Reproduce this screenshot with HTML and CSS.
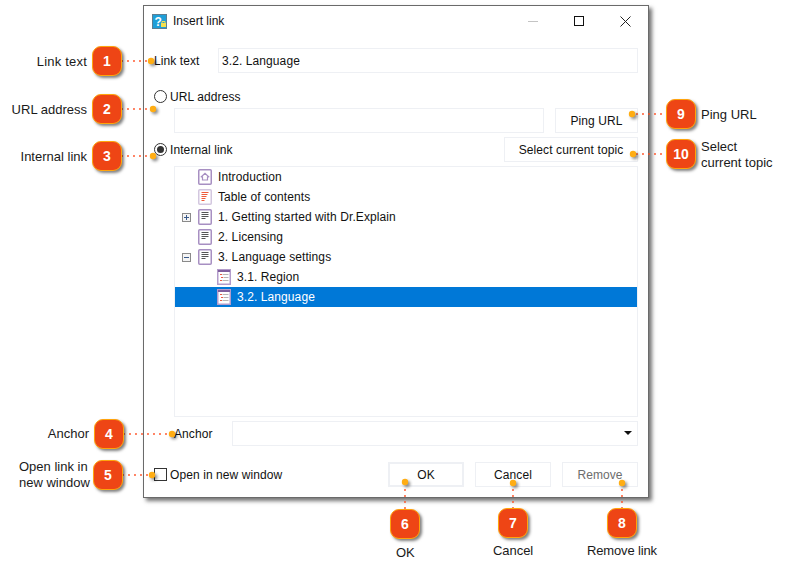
FILE: index.html
```html
<!DOCTYPE html>
<html lang="en">
<head>
<meta charset="utf-8">
<title>Insert link</title>
<link rel="stylesheet" href="styles.css">
</head>
<body>
<svg class="defs" width="0" height="0" aria-hidden="true">
  <symbol id="i-doc" viewBox="0 0 14 16">
    <rect x="0.75" y="0.75" width="12.5" height="14.5" rx="1" fill="#fff" stroke="#a78fc2" stroke-width="1.5"/>
    <path d="M3.5 3.5h7M3.5 5.5h7M3.5 7.5h7M3.5 9.5h4" stroke="#555" stroke-width="1"/>
  </symbol>
  <symbol id="i-home" viewBox="0 0 14 16">
    <rect x="0.75" y="0.75" width="12.5" height="14.5" rx="1" fill="#fff" stroke="#a78fc2" stroke-width="1.5"/>
    <path d="M2.8 8.2L7 4.4l4.2 3.8M4.5 7.5v3.5h5V7.5" fill="none" stroke="#a78fc2" stroke-width="1.2"/>
  </symbol>
  <symbol id="i-toc" viewBox="0 0 14 16">
    <rect x="0.75" y="0.75" width="12.5" height="14.5" rx="1" fill="#fff" stroke="#d3c7df" stroke-width="1.5"/>
    <path d="M3.5 3.5h7M3.5 5.5h6M3.5 7.5h5M3.5 9.5h4M3.5 11.5h3" stroke="#ee5a3a" stroke-width="1"/>
  </symbol>
  <symbol id="i-topic" viewBox="0 0 14 16">
    <rect x="0.75" y="0.75" width="12.5" height="14.5" fill="#fff" stroke="#b39ccb" stroke-width="1.5"/>
    <path d="M1 2h12" stroke="#7f5f9e" stroke-width="2"/>
    <path d="M5.5 5.5h6M6.5 8.5h5M5.5 11.5h6" stroke="#b5b5b5" stroke-width="1"/>
    <path d="M3 5.5h2M4 8.5h2M3 11.5h2" stroke="#ea5a44" stroke-width="1"/>
  </symbol>
</svg>

<main class="canvas">
  <section class="dialog">
    <header class="titlebar">
      <svg class="app-icon" width="15" height="15" viewBox="0 0 15 15" aria-hidden="true">
        <rect x="0.5" y="0.5" width="14" height="14" fill="#1f9fd8" stroke="#5d7f92"/>
        <text class="app-q" x="2.5" y="11.5">?</text>
        <path d="M9 9h5v4H9z" fill="#f5e04e"/>
        <path d="M10 9V7.5h3V9" fill="none" stroke="#f5e04e"/>
      </svg>
      <span class="title">Insert link</span>
      <div class="controls">
        <svg class="ctl" width="10" height="10" viewBox="0 0 10 10" aria-hidden="true"><path d="M0 5.5h10" stroke="#c4c4c4"/></svg>
        <svg class="ctl" width="10" height="10" viewBox="0 0 10 10" aria-hidden="true"><rect x="0.5" y="0.5" width="9" height="9" fill="none" stroke="#111"/></svg>
        <svg class="ctl" width="11" height="11" viewBox="0 0 11 11" aria-hidden="true"><path d="M.5.5l10 10M10.5.5l-10 10" stroke="#222"/></svg>
      </div>
    </header>

    <div class="body">
      <div class="row row-text">
        <label class="lbl-text">Link text</label>
        <div class="field">3.2. Language</div>
      </div>

      <div class="row row-radio1">
        <span class="radio"></span><span class="radio-text">URL address</span>
      </div>

      <div class="row row-url">
        <div class="field"></div>
        <div class="btn btn-ping">Ping URL</div>
      </div>

      <div class="row row-internal">
        <span class="radio radio-on"></span><span>Internal link</span>
        <div class="btn btn-select">Select current topic</div>
      </div>

      <div class="tree">
        <div class="node"><span class="slot"></span><svg class="ico"><use href="#i-home"/></svg>Introduction</div>
        <div class="node"><span class="slot"></span><svg class="ico"><use href="#i-toc"/></svg>Table of contents</div>
        <div class="node"><span class="slot exp"><svg width="9" height="9" viewBox="0 0 9 9"><rect x=".5" y=".5" width="8" height="8" fill="#f4f4f4" stroke="#8a8a8a"/><path d="M2 4.5h5M4.5 2v5" stroke="#3a5a8a"/></svg></span><svg class="ico"><use href="#i-doc"/></svg>1. Getting started with Dr.Explain</div>
        <div class="node"><span class="slot"></span><svg class="ico"><use href="#i-doc"/></svg>2. Licensing</div>
        <div class="node"><span class="slot exp"><svg width="9" height="9" viewBox="0 0 9 9"><rect x=".5" y=".5" width="8" height="8" fill="#f4f4f4" stroke="#8a8a8a"/><path d="M2 4.5h5" stroke="#3a5a8a"/></svg></span><svg class="ico"><use href="#i-doc"/></svg>3. Language settings</div>
        <div class="node node-sub"><svg class="ico"><use href="#i-topic"/></svg>3.1. Region</div>
        <div class="node node-sub node-sel"><svg class="ico"><use href="#i-topic"/></svg>3.2. Language</div>
      </div>

      <div class="row row-anchor">
        <label class="lbl-anchor">Anchor</label>
        <div class="field combo"><span class="arrow"></span></div>
      </div>

      <div class="row row-bottom">
        <span class="check"></span><span>Open in new window</span>
        <div class="btn btn-foot btn-ok">OK</div>
        <div class="btn btn-foot">Cancel</div>
        <div class="btn btn-foot btn-off">Remove</div>
      </div>
    </div>
  </section>

  <svg class="wires" width="789" height="576" viewBox="0 0 789 576" aria-hidden="true">
    <g class="wire">
      <path d="M122 61H150"/><path d="M122 109H152"/><path d="M122 156H152"/>
      <path d="M124 434H171"/><path d="M123 475H151"/>
      <path d="M405 508V483"/><path d="M513 508V484"/><path d="M622 508V484"/>
      <path d="M667 114H633"/><path d="M667 154H634"/>
    </g>
    <g class="dots">
      <circle cx="151" cy="61" r="3.2"/><circle cx="153" cy="109" r="3.2"/><circle cx="153" cy="156" r="3.2"/>
      <circle cx="172" cy="434" r="3.2"/><circle cx="152" cy="475" r="3.2"/>
      <circle cx="405" cy="482" r="3.2"/><circle cx="513" cy="483" r="3.2"/><circle cx="622" cy="483" r="3.2"/>
      <circle cx="632" cy="114" r="3.2"/><circle cx="633" cy="154" r="3.2"/>
    </g>
  </svg>

  <span class="badge b1">1</span><span class="note n1">Link text</span>
  <span class="badge b2">2</span><span class="note n2">URL address</span>
  <span class="badge b3">3</span><span class="note n3">Internal link</span>
  <span class="badge b4">4</span><span class="note n4">Anchor</span>
  <span class="badge b5">5</span><span class="note n5">Open link in<br>new window</span>
  <span class="badge b6">6</span><span class="note n6">OK</span>
  <span class="badge b7">7</span><span class="note n7">Cancel</span>
  <span class="badge b8">8</span><span class="note n8">Remove link</span>
  <span class="badge b9">9</span><span class="note n9">Ping URL</span>
  <span class="badge b10">10</span><span class="note n10">Select<br>current topic</span>
</main>
</body>
</html>
```
FILE: styles.css
```css
* { box-sizing: border-box; }
html, body { margin: 0; padding: 0; background: #fff; }
body { font: 12px/16px "Liberation Sans", Arial, sans-serif; color: #111; overflow: hidden; }
.defs { position: absolute; }
.canvas { position: relative; width: 789px; height: 576px; overflow: hidden; }

/* window */
.dialog {
  position: absolute; left: 143px; top: 5px; width: 506px; height: 493px;
  background: #fff; border: 1px solid #6a6a6a;
  box-shadow: 3px 3px 4px rgba(0,0,0,.55);
  display: flex; flex-direction: column;
}
.titlebar { height: 30px; display: flex; align-items: center; padding-left: 8px; flex: none; }
.app-icon { flex: none; margin-top: 1px; }
.app-q { font: bold 12px "Liberation Sans", sans-serif; fill: #fff; }
.title { margin-left: 6px; }
.controls { margin-left: auto; display: flex; align-items: center; gap: 36px; padding-right: 17px; }
.ctl { display: block; }

.body { padding: 12px 10px 0; display: flex; flex-direction: column; letter-spacing: .09px; }
.row { display: flex; align-items: center; }
.field { height: 25px; border: 1px solid #eef0f4; padding: 4px 3px 0; flex: 1; background: #fff; }
.btn { height: 25px; border: 1px solid #eef0f4; display: flex; align-items: center; justify-content: center; background: #fff; }

.lbl-text { width: 64px; }
.row-radio1 { height: 16px; margin-top: 15px; }
.radio-text { padding-top: 2px; }
.radio { width: 13px; height: 13px; border: 1px solid #333; border-radius: 50%; margin-right: 3px; flex: none; background: #fff; }
.radio-on { position: relative; }
.radio-on::after { content: ""; position: absolute; left: 2px; top: 2px; width: 7px; height: 7px; border-radius: 50%; background: #333; }

.row-url { margin-top: 4px; padding-left: 20px; gap: 11px; }
.btn-ping { width: 83px; }
.row-internal { margin-top: 4px; }
.btn-select { width: 134px; margin-left: auto; }

.tree { margin: 4px 0 0 20px; height: 251px; border: 1px solid #eef0f4; background: #fff; }
.node { height: 20px; display: flex; align-items: center; padding-left: 7px; }
.slot { width: 9px; height: 9px; margin-right: 7px; flex: none; }
.exp svg { display: block; }
.ico { width: 14px; height: 16px; margin-right: 6px; flex: none; }
.node-sub { padding-left: 42px; }
.node-sel { background: #0078d7; color: #fff; }

.row-anchor { margin-top: 4px; padding-left: 20px; }
.lbl-anchor { width: 58px; }
.combo { position: relative; }
.arrow { position: absolute; right: 5px; top: 9px; border-left: 4px solid transparent; border-right: 4px solid transparent; border-top: 4px solid #111; }

.row-bottom { margin-top: 16px; }
.check { width: 13px; height: 13px; border: 1px solid #333; margin-right: 3px; flex: none; background: #fff; }
.btn-foot { width: 76px; margin-left: 11px; }
.btn-foot.btn-ok { margin-left: auto; border: 2px solid #eef0f4; }
.btn-off { color: #6d6d6d; }

/* callouts */
.wires { position: absolute; left: 0; top: 0; pointer-events: none; }
.wire path { fill: none; stroke: #ff4a1c; stroke-width: 1.8; stroke-linecap: round; stroke-dasharray: 0 6; }
.dots circle { fill: #ffad14; }
.dots { filter: drop-shadow(2px 2px 1.5px rgba(0,0,0,.45)); }

.badge {
  position: absolute; width: 30px; height: 30px; border-radius: 9px;
  background: #ee4515; border: 1px solid #ffa40d; color: #fff;
  font: bold 14px/28px "Liberation Sans", sans-serif; text-align: center;
  box-shadow: 2px 2px 3px rgba(0,0,0,.5);
}
.b1 { left: 92px; top: 46px; }
.b2 { left: 92px; top: 94px; }
.b3 { left: 92px; top: 141px; }
.b4 { left: 94px; top: 419px; }
.b5 { left: 93px; top: 460px; }
.b6 { left: 390px; top: 509px; }
.b7 { left: 498px; top: 508px; }
.b8 { left: 607px; top: 508px; }
.b9 { left: 666px; top: 99px; }
.b10 { left: 666px; top: 139px; }

.note { position: absolute; font-size: 13px; line-height: 16px; color: #1a1a1a; white-space: nowrap; }
.n1 { right: 702px; top: 54px; letter-spacing: .2px; }
.n2 { right: 702px; top: 102px; }
.n3 { right: 702px; top: 149px; }
.n4 { right: 700px; top: 426px; }
.n5 { left: 19px; top: 459px; }
.n6 { left: 396px; top: 545px; }
.n7 { left: 493px; top: 543px; letter-spacing: -.05px; }
.n8 { left: 587px; top: 543px; letter-spacing: -.15px; }
.n9 { left: 701px; top: 107px; }
.n10 { left: 701px; top: 139px; }
```
